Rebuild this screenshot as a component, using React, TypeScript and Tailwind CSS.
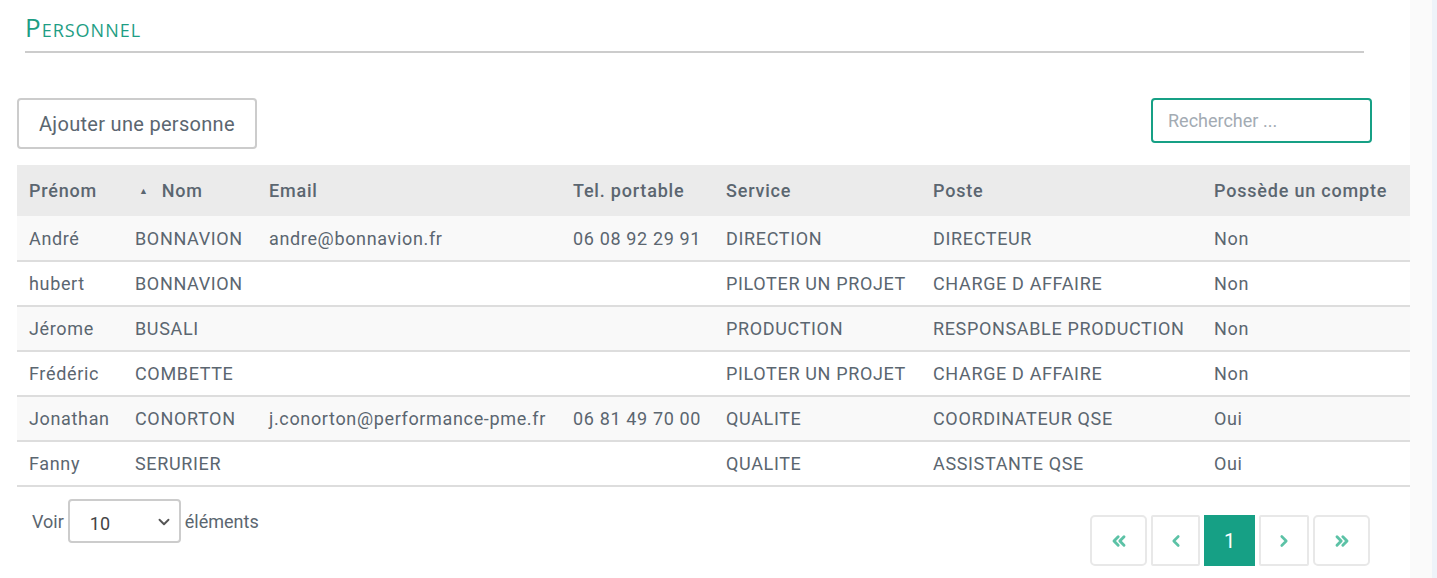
import { ChevronDown, ChevronLeft, ChevronRight, ChevronsLeft, ChevronsRight } from "lucide-react";

const people = [
  { prenom: "André", nom: "BONNAVION", email: "andre@bonnavion.fr", tel: "06 08 92 29 91", service: "DIRECTION", poste: "DIRECTEUR", compte: "Non" },
  { prenom: "hubert", nom: "BONNAVION", email: "", tel: "", service: "PILOTER UN PROJET", poste: "CHARGE D AFFAIRE", compte: "Non" },
  { prenom: "Jérome", nom: "BUSALI", email: "", tel: "", service: "PRODUCTION", poste: "RESPONSABLE PRODUCTION", compte: "Non" },
  { prenom: "Frédéric", nom: "COMBETTE", email: "", tel: "", service: "PILOTER UN PROJET", poste: "CHARGE D AFFAIRE", compte: "Non" },
  { prenom: "Jonathan", nom: "CONORTON", email: "j.conorton@performance-pme.fr", tel: "06 81 49 70 00", service: "QUALITE", poste: "COORDINATEUR QSE", compte: "Oui" },
  { prenom: "Fanny", nom: "SERURIER", email: "", tel: "", service: "QUALITE", poste: "ASSISTANTE QSE", compte: "Oui" },
];

export default function App() {
  return (
    <div className="flex w-[1437px] h-[578px] overflow-hidden bg-white font-['Roboto',sans-serif] text-[#5b6670]">
      <main className="flex-1 pl-[17px]">
        {/* title */}
        <div className="ml-[8px] mr-[46px] pt-[12px] pb-[9px] border-b-2 border-[#cccccc]">
          <h1 className="font-['Open_Sans',sans-serif] text-[26px] leading-[30px] text-[#1e9e84] [font-variant-caps:small-caps] tracking-[1px]">
            Personnel
          </h1>
        </div>

        {/* toolbar */}
        <div className="flex items-start justify-between mt-[45px] mb-[16px]">
          <button className="h-[51px] px-[20px] border-2 border-[#cccccc] rounded-[4px] text-[20px] tracking-[0.3px] text-[#5b6670] bg-white">
            Ajouter une personne
          </button>
          <input
            placeholder="Rechercher ..."
            className="w-[221px] h-[45px] mr-[38px] px-[15px] border-2 border-[#16a085] rounded-[4px] text-[18px] placeholder:text-[#a3abb3] outline-none"
          />
        </div>

        {/* table */}
        <table className="w-[1393px] border-collapse text-[18px] tracking-[0.65px] text-left">
          <thead>
            <tr className="bg-[#ebebeb] h-[51px] tracking-[0.8px]">
              <th className="w-[106px] pl-[12px] font-medium">Prénom</th>
              <th className="w-[134px] pl-[16px] font-medium">
                <span className="inline-flex items-baseline gap-[13px]">
                  <span className="text-[9px] relative top-[-3px]">▲</span>Nom
                </span>
              </th>
              <th className="w-[304px] pl-[12px] font-medium">Email</th>
              <th className="w-[153px] pl-[12px] font-medium">Tel. portable</th>
              <th className="w-[207px] pl-[12px] font-medium">Service</th>
              <th className="w-[281px] pl-[12px] font-medium">Poste</th>
              <th className="pl-[12px] font-medium">Possède un compte</th>
            </tr>
          </thead>
          <tbody>
            {people.map((p, i) => (
              <tr key={i} className={`h-[45px] border-b-2 border-[#dddddd] ${i % 2 === 0 ? "bg-[#f9f9f9]" : "bg-white"}`}>
                <td className="pl-[12px]">{p.prenom}</td>
                <td className="pl-[12px]">{p.nom}</td>
                <td className="pl-[12px]">{p.email}</td>
                <td className="pl-[12px]">{p.tel}</td>
                <td className="pl-[12px]">{p.service}</td>
                <td className="pl-[12px]">{p.poste}</td>
                <td className="pl-[12px]">{p.compte}</td>
              </tr>
            ))}
          </tbody>
        </table>

        {/* footer */}
        <div className="flex items-start justify-between mt-[12px] w-[1393px]">
          <div className="flex items-start text-[18px] pl-[15px]">
            <span className="pt-[9px]">Voir</span>
            <div className="relative w-[113px] h-[44px] mx-[4px] border-2 border-[#cccccc] rounded-[4px] flex items-center">
              <span className="pl-[20px] pt-[4px] text-[#444]">10</span>
              <ChevronDown className="absolute right-[6px] top-[12px] w-[18px] h-[18px] text-[#555]" strokeWidth={2.5} />
            </div>
            <span className="pt-[9px]">éléments</span>
          </div>
          <div className="flex gap-[4px] mt-[16px] mr-[40px]">
            <button className="w-[57px] h-[51px] border-2 border-[#e8e8e8] rounded-[5px] flex items-center justify-center text-[#5cc2a6]">
              <ChevronsLeft className="w-[20px] h-[20px]" strokeWidth={3.5} />
            </button>
            <button className="w-[49px] h-[51px] border-2 border-[#e8e8e8] rounded-[2px] flex items-center justify-center text-[#5cc2a6]">
              <ChevronLeft className="w-[18px] h-[18px]" strokeWidth={3.5} />
            </button>
            <button className="w-[51px] h-[51px] bg-[#16a085] flex items-center justify-center text-white text-[20px]">
              1
            </button>
            <button className="w-[50px] h-[51px] border-2 border-[#e8e8e8] rounded-[2px] flex items-center justify-center text-[#5cc2a6]">
              <ChevronRight className="w-[18px] h-[18px]" strokeWidth={3.5} />
            </button>
            <button className="w-[57px] h-[51px] border-2 border-[#e8e8e8] rounded-[5px] flex items-center justify-center text-[#5cc2a6]">
              <ChevronsRight className="w-[20px] h-[20px]" strokeWidth={3.5} />
            </button>
          </div>
        </div>
      </main>
      <div className="w-[22px] bg-[#fafafa]" />
      <div className="w-[5px] bg-[#eef3f9]" />
    </div>
  );
}
